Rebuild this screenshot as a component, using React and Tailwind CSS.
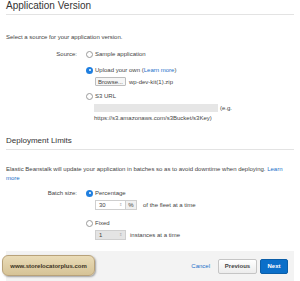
import React from "react";

const Radio = ({ checked }) => (
  <span
    className={
      checked
        ? "flex h-[7px] w-[7px] shrink-0 items-center justify-center rounded-full bg-[#1f7fe0]"
        : "h-[7px] w-[7px] shrink-0 rounded-full border border-[#9a9a9a] bg-white"
    }
  >
    {checked && <span className="h-[2px] w-[2px] rounded-full bg-white" />}
  </span>
);

const Option = ({ checked, children }) => (
  <div className="flex h-[8px] items-center gap-[2px]">
    <Radio checked={checked} />
    <span>{children}</span>
  </div>
);

const Spinner = ({ value, disabled }) => (
  <div
    className={
      "flex h-[10px] w-[31px] items-center justify-between border border-[#cfcfcf] px-[3px] " +
      (disabled ? "bg-[#e4e4e4]" : "bg-white")
    }
  >
    <span>{value}</span>
    <span className="text-[4px] leading-none text-[#aaa]">⇕</span>
  </div>
);

export default function App() {
  return (
    <div className="h-[281px] w-[300px] overflow-hidden bg-white font-['Liberation_Sans',Arial,sans-serif] text-[6px] leading-none text-[#444]">
      <div className="px-[6px]">
        <div className="flex h-[15px] items-end border-b border-[#e3e3e3] pb-[3px] text-[10px] text-[#333]">
          Application Version
        </div>

        <p className="mt-[19px]">Select a source for your application version.</p>

        <div className="mt-[10px] flex">
          <div className="w-[72px] pr-[1px] text-right">
            <span className="inline-flex h-[8px] items-center">Source:</span>
          </div>
          <div className="ml-[8px] flex flex-col">
            <Option>Sample application</Option>
            <div className="mt-[8px]">
              <Option checked>
                Upload your own (<span className="text-[#1a6fc9]">Learn more</span>)
              </Option>
            </div>
            <div className="ml-[9px] mt-[3px] flex items-center gap-[3px]">
              <span className="flex h-[9px] items-center rounded-[1px] border border-[#bdbdbd] bg-[#f6f6f6] px-[2px]">
                Browse...
              </span>
              <span>wp-dev-kit(1).zip</span>
            </div>
            <div className="mt-[6px]">
              <Option>S3 URL</Option>
            </div>
            <div className="ml-[8px] mt-[4px] flex items-center gap-[2px]">
              <span className="h-[8px] w-[124px] bg-[#e6e6e6]" />
              <span>(e.g.</span>
            </div>
            <p className="ml-[8px] mt-[3px]">https://s3.amazonaws.com/s3Bucket/s3Key)</p>
          </div>
        </div>

        <div className="mt-[16px] flex h-[13px] items-end border-b border-[#e3e3e3] pb-[4px] text-[8px] text-[#333]">
          Deployment Limits
        </div>

        <p className="mt-[15px] pr-[4px] leading-[9px]">
          Elastic Beanstalk will update your application in batches so as to avoid downtime when deploying.{" "}
          <span className="text-[#1a6fc9]">Learn</span> <span className="text-[#1a6fc9]">more</span>
        </p>

        <div className="mt-[6px] flex">
          <div className="w-[72px] pr-[1px] text-right">
            <span className="inline-flex h-[8px] items-center">Batch size:</span>
          </div>
          <div className="ml-[8px] flex flex-col">
            <Option checked>Percentage</Option>
            <div className="ml-[9px] mt-[3px] flex items-center">
              <Spinner value="30" />
              <span className="flex h-[10px] w-[11px] items-center justify-center border border-l-0 border-[#cfcfcf] bg-[#f0f0f0]">
                %
              </span>
              <span className="ml-[6px]">of the fleet at a time</span>
            </div>
            <div className="mt-[9px]">
              <Option>Fixed</Option>
            </div>
            <div className="ml-[9px] mt-[3px] flex items-center">
              <Spinner value="1" disabled />
              <span className="ml-[4px]">instances at a time</span>
            </div>
          </div>
        </div>
      </div>

      <div className="relative mx-[6px] mt-[11px] flex h-[30px] items-center justify-end pr-[6px] bg-[#f3f3f3]">
        <span className="mr-[8px] text-[#1a6fc9]">Cancel</span>
        <span className="flex h-[15px] w-[39px] items-center justify-center rounded-[2px] border border-[#c5c5c5] bg-gradient-to-b from-white to-[#ececec] font-bold text-[#444]">
          Previous
        </span>
        <span className="ml-[3px] flex h-[15px] w-[28px] items-center justify-center rounded-[2px] border border-[#0b5ea8] bg-[#0b6fc9] font-bold text-white">
          Next
        </span>
        <div className="absolute -left-[4px] top-[4px] flex h-[21px] w-[93px] items-center justify-center rounded-[6px] border border-[#b8a27a] bg-gradient-to-b from-[#eadcb8] to-[#d6c396] text-[6px] font-bold text-[#3a3222] shadow-[1px_1px_2px_rgba(0,0,0,0.35)]">
          www.storelocatorplus.com
        </div>
      </div>
    </div>
  );
}
